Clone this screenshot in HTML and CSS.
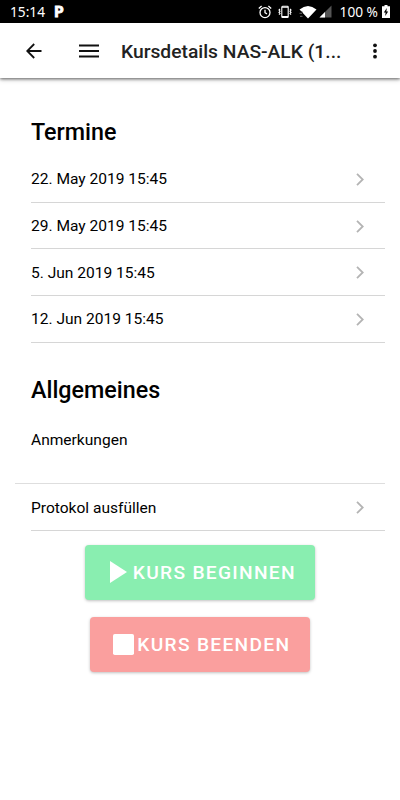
FILE: index.html
```html
<!DOCTYPE html>
<html lang="de">
<head>
  <meta charset="UTF-8" />
  <meta name="viewport" content="width=device-width, initial-scale=1.0"/>
  <title>Kursdetails</title>
  <link rel="stylesheet" href="styles.css">
</head>
<body>
  <div class="statusbar">
    <span class="time">15:14</span>
    <span class="app-badge">P</span>
    <div class="status-icons">
      <svg class="alarm" width="14" height="14" viewBox="0 0 14 14" fill="none" stroke="#fff" stroke-width="1.3">
        <circle cx="7" cy="7.6" r="5"/>
        <path d="M7 4.7v3l2 1.2M.8 3.5l2.8-2.4M13.2 3.5l-2.8-2.4"/>
      </svg>
      <svg class="vibrate" width="14" height="14" viewBox="0 0 14 14" fill="none" stroke="#fff" stroke-width="1.1">
        <rect x="3.8" y="1.3" width="6.4" height="11.2" rx="0.8"/>
        <path d="M4 2.3h6M4 11.5h6M2 4l-1 1 1 1.2-1 1.2 1 1.2-1 1.1M12 4l1 1-1 1.2 1 1.2-1 1.2 1 1.1"/>
      </svg>
      <svg class="wifi" width="18" height="14" viewBox="0 0 18 14">
        <path fill="#fff" d="M.5 4.6Q9-2.8 17.5 4.6L9 13.4z"/>
        <path fill="#000" d="M0 6.6h3.4V14H0z"/>
        <path fill="#555" d="M.5 7.8h2.5V9H.5zM1 10.8h2.5V12H1z"/>
      </svg>
      <svg class="signal" width="13" height="13" viewBox="0 0 13 13">
        <path fill="#555" d="M12.5.5v12H.5z"/>
        <path fill="#fff" d="M6 7v5.5H.5z"/>
      </svg>
      <span class="percent">100 %</span>
      <svg class="battery" width="8" height="13" viewBox="0 0 8 13">
        <path fill="#fff" d="M2.5 0h3v1.3H8V13H0V1.3h2.5z"/>
        <path fill="#000" d="M4.8 3 1.8 7.4h1.8L3.2 11l3-4.6H4.4z"/>
      </svg>
    </div>
  </div>

  <header class="toolbar">
    <svg class="back" width="16" height="16" viewBox="0 0 16 16" fill="none" stroke="#111" stroke-width="1.8">
      <path d="M15.5 8H1.5M8.2 1 1.2 8l7 7"/>
    </svg>
    <svg class="menu" width="20" height="14" viewBox="0 0 20 14" fill="#111">
      <path d="M0 .5h20v2H0zM0 6h20v2H0zM0 11.5h20v2H0z"/>
    </svg>
    <h1>Kursdetails NAS-ALK (1...</h1>
    <svg class="more" width="4" height="16" viewBox="0 0 4 16" fill="#111">
      <circle cx="2" cy="2.3" r="1.9"/>
      <circle cx="2" cy="8" r="1.9"/>
      <circle cx="2" cy="13.7" r="1.9"/>
    </svg>
  </header>

  <main class="content">
    <h2>Termine</h2>
    <div class="list">
      <div class="item">22. May 2019 15:45 <svg class="chevron" viewBox="0 0 8 13"><path d="M1 .8l5.7 5.7L1 12.2"/></svg></div>
      <div class="item">29. May 2019 15:45 <svg class="chevron" viewBox="0 0 8 13"><path d="M1 .8l5.7 5.7L1 12.2"/></svg></div>
      <div class="item">5. Jun 2019 15:45 <svg class="chevron" viewBox="0 0 8 13"><path d="M1 .8l5.7 5.7L1 12.2"/></svg></div>
      <div class="item">12. Jun 2019 15:45 <svg class="chevron" viewBox="0 0 8 13"><path d="M1 .8l5.7 5.7L1 12.2"/></svg></div>
    </div>

    <h2 class="general">Allgemeines</h2>
    <div class="notes">Anmerkungen</div>
    <div class="list">
      <div class="item">Protokol ausfüllen <svg class="chevron" viewBox="0 0 8 13"><path d="M1 .8l5.7 5.7L1 12.2"/></svg></div>
    </div>

    <div class="buttons">
      <button type="button" class="btn start">
        <svg width="17" height="22" viewBox="0 0 17 22" fill="#fff"><path d="M0 0l17 11L0 22z"/></svg>
        <span>KURS BEGINNEN</span>
      </button>
      <button type="button" class="btn stop">
        <svg width="21" height="21" viewBox="0 0 21 21" fill="#fff"><rect width="21" height="21" rx="1.8"/></svg>
        <span>KURS BEENDEN</span>
      </button>
    </div>
  </main>
</body>
</html>
```

FILE: styles.css
```css
* {
  box-sizing: border-box;
}
body {
  margin: 0;
  min-height: 800px;
  background: #fff;
  color: #000;
  font-family: Roboto, sans-serif;
}
.statusbar {
  display: flex;
  align-items: center;
  height: 23px;
  padding: 0 10px;
  background: #000;
  color: #fff;
  font-family: "Noto Sans", sans-serif;
  font-size: 13.7px;
}
.time {
  width: 44.5px;
}
.app-badge {
  font-family: Roboto, sans-serif;
  font-size: 14px;
  font-weight: 900;
  -webkit-text-stroke: 0.8px #fff;
}
.status-icons {
  display: flex;
  align-items: center;
  margin-left: auto;
}
.vibrate {
  margin-left: 6px;
}
.wifi {
  margin-left: 7px;
}
.signal {
  margin-left: 2px;
}
.percent {
  margin: 0 4px 0 8px;
  white-space: nowrap;
}
.toolbar {
  display: flex;
  align-items: center;
  height: 55px;
  padding: 0 23px 0 26px;
  box-shadow: 0 1px 3px rgba(0, 0, 0, 0.55), 0 2px 5px rgba(0, 0, 0, 0.15);
}
.toolbar svg {
  flex: none;
}
.menu {
  margin-left: 37px;
}
.toolbar h1 {
  margin: 0 0 0 22px;
  padding-top: 1px;
  color: #222;
  font-size: 19.25px;
  font-weight: 500;
  white-space: nowrap;
}
.more {
  margin-left: auto;
}
.content {
  padding: 38px 15px 0;
}
h2 {
  margin: 0;
  padding-left: 16px;
  font-size: 23.3px;
  line-height: 32px;
  font-weight: 500;
}
.list {
  padding-left: 16px;
}
h2 + .list {
  padding-top: 8px;
}
.item {
  display: flex;
  align-items: center;
  justify-content: space-between;
  height: 46.7px;
  padding-top: 1px;
  padding-right: 21px;
  border-bottom: 1px solid #d6d6d6;
  font-size: 15.55px;
}
.chevron {
  width: 8px;
  height: 13px;
  fill: none;
  stroke: #b4b4b4;
  stroke-width: 1.8;
}
.general {
  margin-top: 31px;
}
.notes {
  height: 78.5px;
  padding: 25px 0 0 16px;
  border-bottom: 1px solid #dedede;
  font-size: 15.55px;
}
.buttons {
  display: flex;
  flex-direction: column;
  align-items: center;
  gap: 17px;
  padding-top: 14px;
}
.btn {
  display: flex;
  align-items: center;
  height: 55px;
  padding: 0;
  border: none;
  border-radius: 4px;
  color: #fff;
  font-family: Roboto, sans-serif;
  font-size: 19.2px;
  font-weight: 500;
  letter-spacing: 1.3px;
  white-space: nowrap;
  box-shadow: 0 1px 3px rgba(0, 0, 0, 0.25);
}
.start {
  width: 229.5px;
  padding-left: 25px;
  background: #89eeb0;
}
.start svg {
  margin-right: 5.5px;
}
.stop {
  width: 219.5px;
  padding-left: 23px;
  background: #fa9f9e;
}
.stop svg {
  margin-right: 3px;
}
```
